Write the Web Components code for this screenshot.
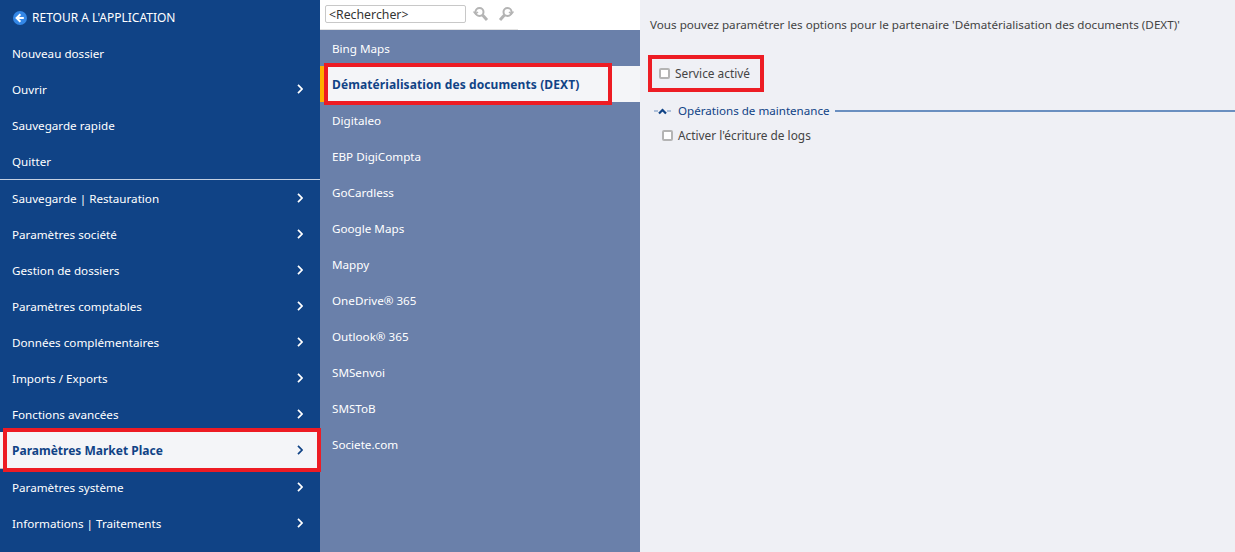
<!DOCTYPE html>
<html lang="fr">
<head>
<meta charset="utf-8">
<title>Paramètres Market Place</title>
<style>
  html, body { margin: 0; height: 100%; }
  body { font-family: "Noto Sans", "DejaVu Sans", sans-serif; font-size: 11.67px; overflow: hidden; }
</style>
</head>
<body>
<app-shell>
  <main-menu slot="menu">
    <back-row>RETOUR A L'APPLICATION</back-row>
    <menu-row>Nouveau dossier</menu-row>
    <menu-row arrow>Ouvrir</menu-row>
    <menu-row>Sauvegarde rapide</menu-row>
    <menu-row>Quitter</menu-row>
    <menu-sep></menu-sep>
    <menu-row arrow>Sauvegarde | Restauration</menu-row>
    <menu-row arrow>Paramètres société</menu-row>
    <menu-row arrow>Gestion de dossiers</menu-row>
    <menu-row arrow>Paramètres comptables</menu-row>
    <menu-row arrow>Données complémentaires</menu-row>
    <menu-row arrow>Imports / Exports</menu-row>
    <menu-row arrow>Fonctions avancées</menu-row>
    <menu-row arrow active marked>Paramètres Market Place</menu-row>
    <menu-row arrow>Paramètres système</menu-row>
    <menu-row arrow>Informations | Traitements</menu-row>
  </main-menu>
  <partner-list slot="list">
    <search-bar></search-bar>
    <partner-row>Bing Maps</partner-row>
    <partner-row active marked>Dématérialisation des documents (DEXT)</partner-row>
    <partner-row>Digitaleo</partner-row>
    <partner-row>EBP DigiCompta</partner-row>
    <partner-row>GoCardless</partner-row>
    <partner-row>Google Maps</partner-row>
    <partner-row>Mappy</partner-row>
    <partner-row>OneDrive® 365</partner-row>
    <partner-row>Outlook® 365</partner-row>
    <partner-row>SMSenvoi</partner-row>
    <partner-row>SMSToB</partner-row>
    <partner-row>Societe.com</partner-row>
  </partner-list>
  <options-pane slot="pane"></options-pane>
</app-shell>

<script>
class AppShell extends HTMLElement {
    constructor(){
        super();
        this.attachShadow({mode: 'open'});
        this.shadowRoot.innerHTML=`
        <style>
          :host { display: grid; grid-template-columns: 320px 320px 1fr; height: 552px; overflow: hidden; }
        </style>
        <slot name="menu"></slot>
        <slot name="list"></slot>
        <slot name="pane"></slot>
        `;
    }
}

class MainMenu extends HTMLElement {
    constructor(){
        super();
        this.attachShadow({mode: 'open'});
        this.shadowRoot.innerHTML=`
        <style>
          :host { display: block; height: 552px; background-color: #104386; color: #fff; }
        </style>
        <slot></slot>
        `;
    }
}

class BackRow extends HTMLElement {
    constructor(){
        super();
        this.attachShadow({mode: 'open'});
        this.shadowRoot.innerHTML=`
        <style>
          :host { display: flex; align-items: center; gap: 5px; height: 35px; padding-left: 13px; font-size: 12px; }
          svg { display: block; }
        </style>
        <svg width="14" height="14" viewBox="0 0 14 14">
          <circle cx="7" cy="7" r="7" fill="#3487e6"/>
          <path d="M7.4 3.2 3.6 7l3.8 3.8M4.2 7h6.6" fill="none" stroke="#fff" stroke-width="2"/>
        </svg>
        <slot></slot>
        `;
    }
}

class MenuRow extends HTMLElement {
    constructor(){
        super();
        this.attachShadow({mode: 'open'});
        this.shadowRoot.innerHTML=`
        <style>
          :host { display: flex; align-items: center; justify-content: space-between; position: relative; height: 36px; padding: 0 17px 0 12px; box-sizing: border-box; line-height: 14px; }
          slot { display: block; margin-top: 2px; }
          :host([active]) { height: 37px; background-color: #f4f5f8; color: #104386; font-weight: bold; font-size: 12px; border-bottom: 1px solid #b8b8b8; }
          svg { display: none; }
          :host([arrow]) svg { display: block; }
          .mark { display: none; position: absolute; left: 3px; right: -1px; top: -4px; bottom: -4px; border: 4px solid #ed1c24; box-sizing: border-box; }
          :host([marked]) .mark { display: block; }
        </style>
        <slot></slot>
        <svg width="6" height="10" viewBox="0 0 6 10"><path d="M1 .8 5 5 1 9.2" fill="none" stroke="currentColor" stroke-width="1.7"/></svg>
        <span class="mark"></span>
        `;
    }
}

class MenuSep extends HTMLElement {
    constructor(){
        super();
        this.attachShadow({mode: 'open'});
        this.shadowRoot.innerHTML=`
        <style>
          :host { display: block; height: 1px; background-color: #c4d0e2; }
        </style>
        `;
    }
}

class PartnerList extends HTMLElement {
    constructor(){
        super();
        this.attachShadow({mode: 'open'});
        this.shadowRoot.innerHTML=`
        <style>
          :host { display: block; height: 552px; background-color: #6a80aa; color: #fff; }
        </style>
        <slot></slot>
        `;
    }
}

class SearchBar extends HTMLElement {
    constructor(){
        super();
        this.attachShadow({mode: 'open'});
        this.shadowRoot.innerHTML=`
        <style>
          :host { display: flex; align-items: center; gap: 7px; height: 30px; padding: 0 0 2px 5px; box-sizing: border-box; color: #333; font-size: 12.3px;
            background: #fff linear-gradient(#e2e2e2, #e2e2e2) no-repeat 0 100% / 198px 1px; }
          .box { width: 136px; height: 16px; line-height: 17px; border: 1px solid #c8c8c8; border-radius: 2px; padding-left: 3px; }
          .icons { display: flex; gap: 9px; }
          svg { display: block; }
        </style>
        <div class="box">&lt;Rechercher&gt;</div>
        <div class="icons">
          <svg width="16" height="16" viewBox="0 0 16 16" fill="none" stroke="#b4b4b4"><circle cx="6.5" cy="6" r="4" stroke-width="2"/><path d="M9.5 9 14 14" stroke-width="3"/><path d="M.5 5.5 2.5 8 5 6" stroke-width="1.5"/></svg>
          <svg width="16" height="16" viewBox="0 0 16 16" fill="none" stroke="#b4b4b4"><circle cx="9.5" cy="6" r="4" stroke-width="2"/><path d="M6.5 9 2 14" stroke-width="3"/><path d="M15.5 5.5 13.5 8 11 6" stroke-width="1.5"/></svg>
        </div>
        `;
    }
}

class PartnerRow extends HTMLElement {
    constructor(){
        super();
        this.attachShadow({mode: 'open'});
        this.shadowRoot.innerHTML=`
        <style>
          :host { display: flex; align-items: center; position: relative; height: 36px; padding-left: 12px; box-sizing: border-box; line-height: 14px; }
          slot { display: block; margin-top: 2px; }
          :host([active]) { background-color: #f4f5f8; color: #104386; font-weight: bold; font-size: 12px; letter-spacing: .1px; border-left: 4px solid #ffb000; padding-left: 8px; }
          .mark { display: none; position: absolute; left: 0; top: -3px; width: 288px; bottom: -3px; border: 4px solid #ed1c24; box-sizing: border-box; }
          :host([marked]) .mark { display: block; }
        </style>
        <slot></slot>
        <span class="mark"></span>
        `;
    }
}

class CheckOption extends HTMLElement {
    constructor(){
        super();
        this.attachShadow({mode: 'open'});
        this.shadowRoot.innerHTML=`
        <style>
          :host { display: flex; align-items: center; gap: 5px; line-height: 16px; font-size: 11.85px; }
          i { display: block; width: 7px; height: 7px; background-color: #fff; border: 2px solid #b4b4b4; border-radius: 2px; }
        </style>
        <i></i><slot></slot>
        `;
    }
}

class OptionsPane extends HTMLElement {
    constructor(){
        super();
        this.attachShadow({mode: 'open'});
        this.shadowRoot.innerHTML=`
        <style>
          :host { display: block; height: 552px; background-color: #eff0f5; color: #444; padding: 17px 0 0 10px; box-sizing: border-box; line-height: 16px; }
          .service { display: flex; align-items: center; position: relative; width: 116px; height: 37px; margin: 22px 0 0 -2px; padding: 0 0 1px 11px; box-sizing: border-box; }
          .mark { position: absolute; inset: 0; border: 4px solid #ed1c24; }
          .group { display: flex; align-items: center; margin-top: 11px; color: #104386; height: 16px; font-size: 11.6px; }
          .group svg { display: block; margin-right: 4px; }
          .group hr { flex: 1; border: 0; height: 2px; margin: 0 0 0 5px; background-color: #6a8fc0; }
          .logs { margin: 8px 0 0 12px; }
        </style>
        <div>Vous pouvez paramétrer les options pour le partenaire 'Dématérialisation des documents (DEXT)'</div>
        <div class="service"><span class="mark"></span><check-option>Service activé</check-option></div>
        <div class="group">
          <svg width="24" height="8" viewBox="0 0 24 8" fill="none"><path d="M4 4H8M17 4H21" stroke="#6a8fc0"/><path d="M9 6.5 12.5 3 16 6.5" stroke="#104386" stroke-width="2.2"/></svg>
          <span>Opérations de maintenance</span><hr>
        </div>
        <check-option class="logs">Activer l'écriture de logs</check-option>
        `;
    }
}

customElements.define('app-shell', AppShell);
customElements.define('main-menu', MainMenu);
customElements.define('back-row', BackRow);
customElements.define('menu-row', MenuRow);
customElements.define('menu-sep', MenuSep);
customElements.define('partner-list', PartnerList);
customElements.define('search-bar', SearchBar);
customElements.define('partner-row', PartnerRow);
customElements.define('check-option', CheckOption);
customElements.define('options-pane', OptionsPane);
</script>
</body>
</html>
